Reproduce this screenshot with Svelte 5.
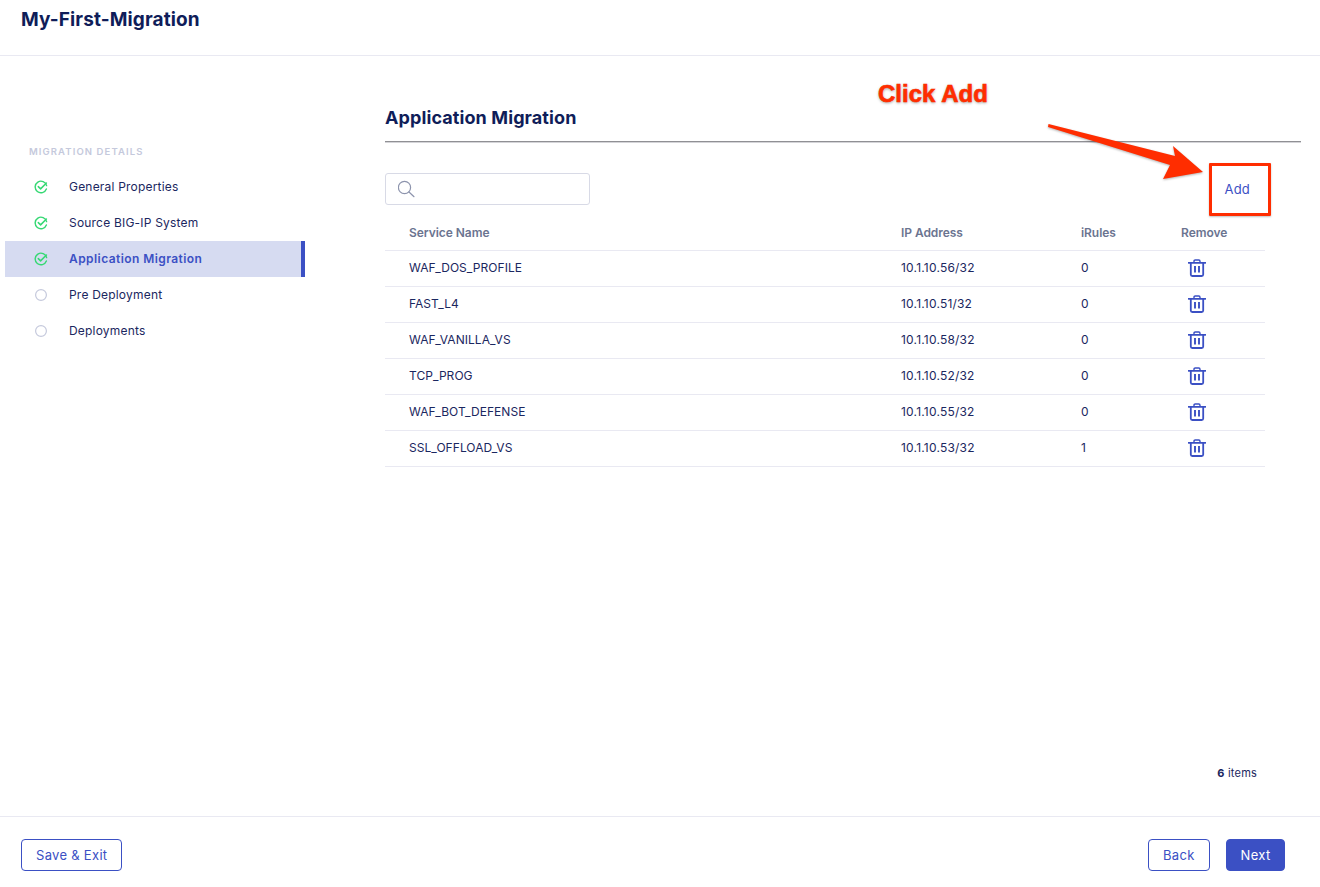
<script>
  const steps = [
    { name: "General Properties", done: true },
    { name: "Source BIG-IP System", done: true },
    { name: "Application Migration", done: true, active: true },
    { name: "Pre Deployment" },
    { name: "Deployments" },
  ];

  const services = [
    { name: "WAF_DOS_PROFILE", ip: "10.1.10.56/32", irules: 0 },
    { name: "FAST_L4", ip: "10.1.10.51/32", irules: 0 },
    { name: "WAF_VANILLA_VS", ip: "10.1.10.58/32", irules: 0 },
    { name: "TCP_PROG", ip: "10.1.10.52/32", irules: 0 },
    { name: "WAF_BOT_DEFENSE", ip: "10.1.10.55/32", irules: 0 },
    { name: "SSL_OFFLOAD_VS", ip: "10.1.10.53/32", irules: 1 },
  ];
</script>

<div class="page">
  <header class="top">
    <h1>My-First-Migration</h1>
  </header>

  <div class="body">
    <nav class="side">
      <div class="side-label">MIGRATION DETAILS</div>
      {#each steps as step}
        <div class="step" class:active={step.active}>
          {#if step.done}
            <svg class="step-icon" width="14" height="14" viewBox="0 0 14 14" fill="none">
              <path d="M12.6 5.6A5.8 5.8 0 1 0 12.4 9" stroke="#35d873" stroke-width="1.4" stroke-linecap="round" />
              <path d="M4.3 6.6 6.6 8.9 12.4 3" stroke="#35d873" stroke-width="1.5" stroke-linecap="round" stroke-linejoin="round" />
            </svg>
          {:else}
            <svg class="step-icon" width="14" height="14" viewBox="0 0 14 14" fill="none">
              <circle cx="7" cy="7" r="5.4" stroke="#c5c9dc" stroke-width="1.2" />
            </svg>
          {/if}
          <span>{step.name}</span>
        </div>
      {/each}
    </nav>

    <main class="content">
      <h2>Application Migration</h2>

      <div class="toolbar">
        <div class="search">
          <svg width="18" height="18" viewBox="0 0 18 18" fill="none">
            <circle cx="6.500" cy="7.500" r="6.100" stroke="#8d94ad" stroke-width="1.200" />
            <path d="M11 12l5 4.700" stroke="#8d94ad" stroke-width="1.200" stroke-linecap="round" />
          </svg>
        </div>
        <span class="add">Add</span>
      </div>

      <div class="table">
        <div class="row head">
          <div>Service Name</div>
          <div>IP Address</div>
          <div>iRules</div>
          <div>Remove</div>
        </div>
        {#each services as s}
          <div class="row">
            <div class="name">{s.name}</div>
            <div>{s.ip}</div>
            <div>{s.irules}</div>
            <div class="trash">
              <svg width="18" height="18" viewBox="0 0 18 18" fill="none" stroke="#3b50c4" stroke-width="1.800">
                <path d="M.5 3.800h17" stroke-linecap="round" />
                <path d="M6 3.800V2.200C6 1.500 6.500 1 7.200 1h3.600c.7 0 1.200.5 1.200 1.200v1.600" stroke-width="1.400" />
                <path d="M2.800 3.800v11.700c0 .8.700 1.500 1.500 1.500h9.400c.8 0 1.500-.7 1.500-1.500V3.800" />
                <path d="M7 7v6.500M11 7v6.500" stroke-width="1.900" />
              </svg>
            </div>
          </div>
        {/each}
      </div>

      <div class="count"><b>6</b> items</div>
    </main>
  </div>

  <footer class="bottom">
    <button class="btn">Save &amp; Exit</button>
    <div class="right">
      <button class="btn back">Back</button>
      <button class="btn primary">Next</button>
    </div>
  </footer>

  <!-- screenshot annotation laid over the page -->
  <div class="callout-text">Click Add</div>
  <div class="callout-box"></div>
  <svg class="callout-arrow" width="170" height="70" viewBox="0 0 170 70">
    <path d="M.5 2 0 5 122 43 115 57 155 50 125 24 127 34Z" fill="#ff2d00" />
  </svg>
</div>

<style>
  :global(body) {
    margin: 0;
    background: #fff;
  }

  .page {
    position: relative;
    display: flex;
    flex-direction: column;
    height: 887px;
    overflow: hidden;
    font-family: Inter, "Liberation Sans", sans-serif;
    font-size: 12px;
    color: #1b2760;
    letter-spacing: 0.2px;
  }

  .top {
    flex: none;
    height: 46px;
    border-bottom: 1px solid #e9e9f2;
    padding: 9px 21px 0;
  }

  h1 {
    margin: 0;
    font-size: 19px;
    line-height: 22px;
    font-weight: 700;
    letter-spacing: 0.12px;
    color: #0f1d59;
  }

  .body {
    flex: 1;
    display: flex;
    min-height: 0;
  }

  .side {
    width: 300px;
    margin-left: 5px;
    margin-right: 80px;
    padding-top: 90px;
    flex: none;
  }

  .side-label {
    padding-left: 24px;
    height: 23px;
    line-height: 12px;
    font-size: 9.500px;
    font-weight: 600;
    letter-spacing: 1.100px;
    color: #c5c9dc;
  }

  .step {
    display: flex;
    align-items: center;
    height: 36px;
    box-sizing: border-box;
    padding-left: 29px;
    gap: 21px;
  }

  .step span {
    margin-bottom: 2px;
  }

  .step.active {
    background: #d6dbf1;
    border-right: 4px solid #3b50c4;
    color: #3b50c4;
    font-weight: 600;
    letter-spacing: 0.43px;
  }

  .step-icon {
    flex: none;
  }

  .content {
    flex: 1;
    display: flex;
    flex-direction: column;
    min-width: 0;
    padding-right: 19px;
  }

  h2 {
    margin: 49px 0 0;
    height: 36px;
    border-bottom: 1px solid #909094;
    box-shadow: 0 1px 0 #d4d4d8;
    font-size: 18px;
    line-height: 26px;
    font-weight: 700;
    letter-spacing: 0.1px;
    color: #0f1d59;
  }

  .toolbar {
    display: flex;
    justify-content: space-between;
    align-items: center;
    margin-top: 31px;
    height: 32px;
  }

  .search {
    width: 205px;
    height: 32px;
    box-sizing: border-box;
    border: 1px solid #d8dae6;
    border-radius: 3px;
    padding: 6px 12px;
  }

  .search svg {
    display: block;
  }

  .add {
    font-size: 13px;
    color: #3b50c4;
    margin-right: 51px;
  }

  .table {
    width: 880px;
    margin-top: 10px;
  }

  .row {
    display: grid;
    grid-template-columns: 492px 180px 100px 1fr;
    align-items: center;
    height: 36px;
    box-sizing: border-box;
    padding-left: 24px;
    padding-bottom: 2px;
    border-bottom: 1px solid #e9e9f2;
  }

  .row.head {
    padding-bottom: 0;
    color: #6b7490;
    font-weight: 600;
    letter-spacing: -0.05px;
  }

  .name {
    letter-spacing: 0.05px;
  }

  .trash {
    padding-left: 7px;
    height: 18px;
  }

  .trash svg {
    display: block;
  }

  .count {
    margin-top: auto;
    margin-bottom: 36px;
    text-align: right;
    padding-right: 44px;
    font-size: 11px;
  }

  .bottom {
    flex: none;
    height: 71px;
    box-sizing: border-box;
    border-top: 1px solid #e9e9f2;
    display: flex;
    justify-content: space-between;
    align-items: flex-start;
    padding: 22px 35px 0 21px;
  }

  .right {
    display: flex;
    gap: 16px;
  }

  .btn {
    height: 32px;
    padding: 0 14px;
    border: 1px solid #3b50c4;
    border-radius: 4px;
    background: #fff;
    color: #3b50c4;
    font: inherit;
    font-size: 13px;
    letter-spacing: 0.3px;
  }

  .btn.back {
    padding: 0 14.500px;
  }

  .btn.primary {
    padding: 0 13.500px;
    background: #3b50c4;
    color: #fff;
  }

  .callout-text {
    position: absolute;
    left: 878px;
    top: 80px;
    font-family: "Liberation Sans", sans-serif;
    font-size: 24px;
    line-height: 28px;
    font-weight: 700;
    letter-spacing: 0;
    color: #ff2d00;
    -webkit-text-stroke: 0.6px #ff2d00;
    text-shadow: 0 1px 3px rgba(0, 0, 0, 0.4), 0 0 2px #fff;
  }

  .callout-box {
    position: absolute;
    left: 1209px;
    top: 163px;
    width: 56px;
    height: 47px;
    border: 3px solid #ff2d00;
    border-radius: 1px;
    box-shadow: 0 1px 2px rgba(0, 0, 0, 0.25);
  }

  .callout-arrow {
    position: absolute;
    left: 1048px;
    top: 122px;
    filter: drop-shadow(0 1px 1px rgba(0, 0, 0, 0.3));
  }
</style>
